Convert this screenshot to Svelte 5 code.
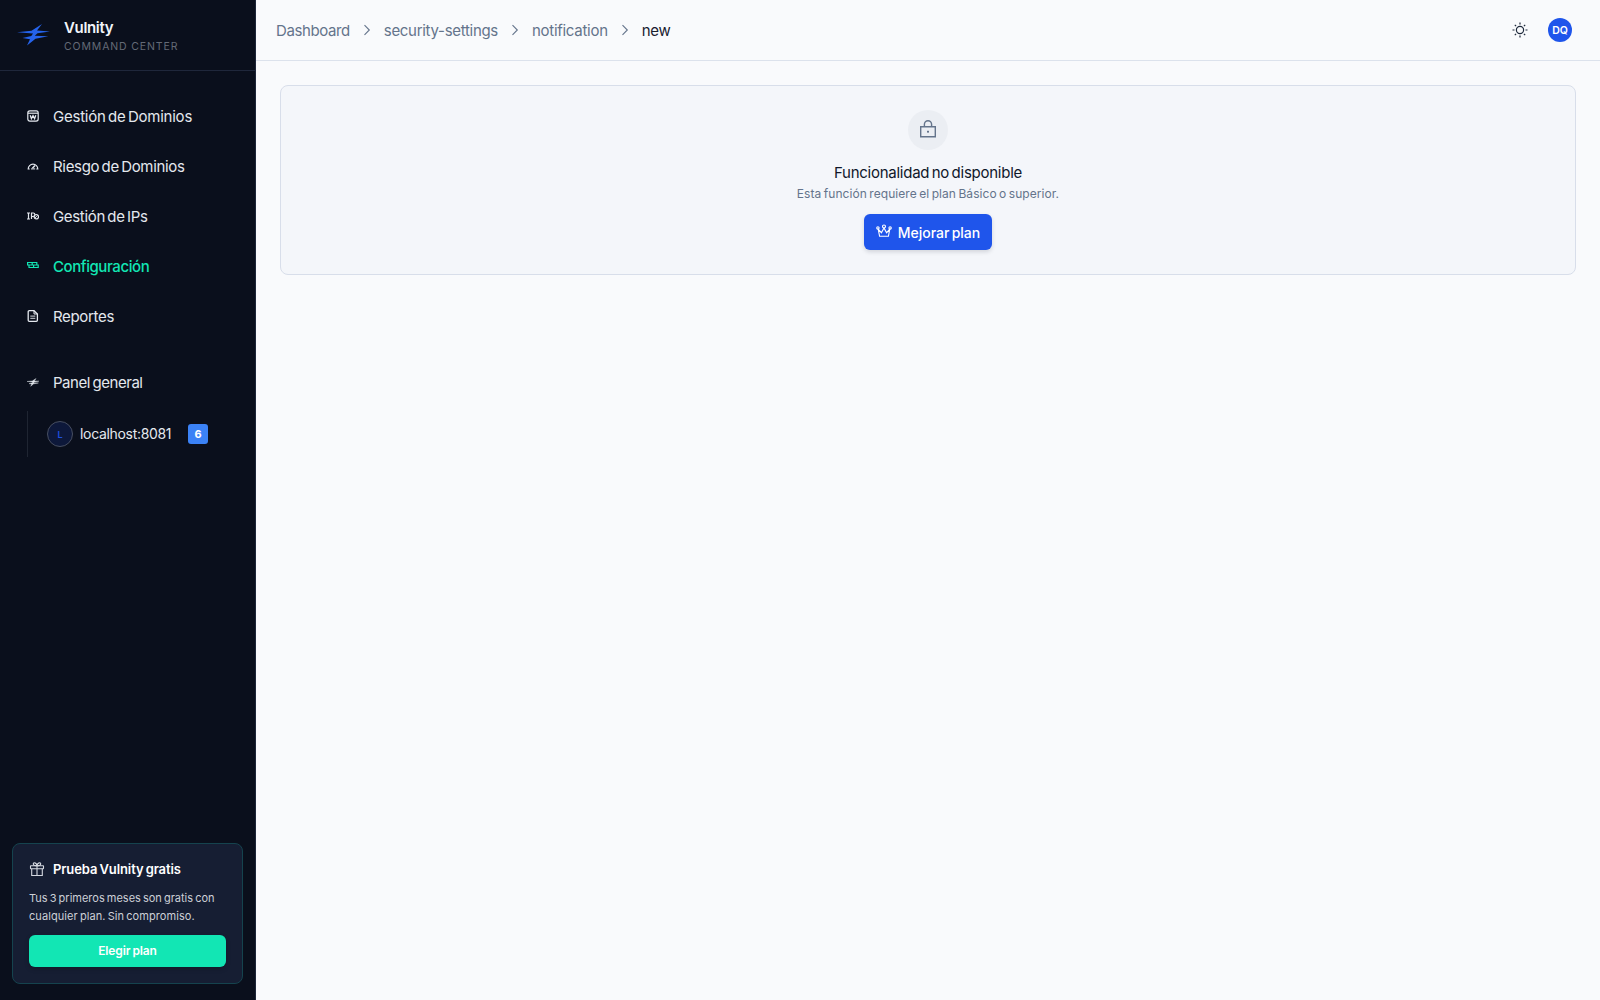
<script lang="ts">
  interface NavItem {
    id: string;
    label: string;
  }

  const navItems: NavItem[] = [
    { id: 'domains', label: 'Gestión de Dominios' },
    { id: 'risk', label: 'Riesgo de Dominios' },
    { id: 'ips', label: 'Gestión de IPs' },
    { id: 'config', label: 'Configuración' },
    { id: 'reports', label: 'Reportes' }
  ];

  const crumbs = ['Dashboard', 'security-settings', 'notification', 'new'];

  let active = $state('config');
</script>

{#snippet bolt()}
  <path d="M25 0 L20 6.6 L33 7.4 L20.5 9.3 L17.7 11.8 L31.3 12.3 L18.5 14.7 L10 21.4 L13 15.3 L5.5 14.1 L14.3 11.9 L16 9.5 L0 8.2 L14.5 6.7 Z" />
{/snippet}

<div class="app">
  <aside class="sidebar">
    <div class="brand">
      <svg class="logo" viewBox="0 0 33 22" width="33" height="22" fill="#2563eb">{@render bolt()}</svg>
      <div class="brand-text">
        <span class="brand-name">Vulnity</span>
        <span class="brand-sub">COMMAND CENTER</span>
      </div>
    </div>

    <nav>
      {#each navItems as item}
        <button class="nav-item {item.id}" class:active={active === item.id} onclick={() => (active = item.id)}>
          <svg class="nav-icon" viewBox="0 0 12 12" width="12" height="12" fill="none" stroke="currentColor">
            {#if item.id === 'domains'}
              <rect x="0.8" y="0.9" width="10.4" height="10.2" rx="2" stroke-width="1.2" />
              <path d="M1 3.2h10" stroke-width="1.2" />
              <path d="M3.2 5.2l1.2 3.4L6 5.6l1.6 3 1.2-3.4" stroke-width="1.3" />
            {:else if item.id === 'risk'}
              <path d="M2.7 9H1.2a4.8 4.8 0 0 1 9.6 0H9.3" stroke-width="1.2" />
              <path d="M5.4 8.2L8 5.4" stroke-width="1.5" />
              <path d="M4 8.9h4.2" />
            {:else if item.id === 'ips'}
              <path d="M0 3h3M1.5 3v6M0 9h3M4.5 9V3H6.2a1.7 1.7 0 0 1 0 3.5H4.5" stroke-width="1.2" />
              <circle cx="9.3" cy="6.7" r="2.2" stroke-width="1.2" />
              <path d="M7.8 8.2l2.8-3" />
            {:else if item.id === 'config'}
              <path d="M.6 2.5h9.2v2.5H.6zM5.2 2.5V5M2 5h9.2v2.5H2zM6.6 5v2.5" stroke-width="1.2" />
            {:else}
              <path d="M1.2 1.8Q1.2.7 2.3.7H7L10.4 4v6.2q0 1.1-1.1 1.1h-7q-1.1 0-1.1-1.1z" stroke-width="1.3" />
              <path d="M7 .8V4h3.3" />
              <path d="M3.3 6.2h5M3.3 8.3h5" opacity=".75" stroke-width="1.3" />
            {/if}
          </svg>
          <span class="nav-label">{item.label}</span>
        </button>
      {/each}
    </nav>

    <div class="panel">
      <button class="nav-item general">
        <svg class="nav-icon" viewBox="0 0 33 22" width="12" height="9" fill="currentColor" stroke="currentColor" stroke-width="1">{@render bolt()}</svg>
        <span class="nav-label">Panel general</span>
      </button>
      <div class="hosts">
        <span class="host-avatar">L</span>
        <span class="host-name">localhost:8081</span>
        <span class="badge">6</span>
      </div>
    </div>

    <section class="promo">
      <div class="promo-title">
        <svg viewBox="0 0 16 16" width="16" height="16" fill="none" stroke="#d4d8e0" stroke-width="1.1">
          <rect x="1.5" y="4.7" width="13" height="3" rx=".4" />
          <path d="M2.7 7.7v6.8h10.6V7.7M8 4.7v9.8M8 4.6C6.5 4.8 4.3 4.6 4.3 3S7.4 1 8 4.6C8.6 1 11.7 1.4 11.7 3S9.5 4.8 8 4.6z" />
        </svg>
        <strong>Prueba Vulnity gratis</strong>
      </div>
      <p><span class="line-one">Tus 3 primeros meses son gratis con</span><br /><span class="line-two">cualquier plan. Sin compromiso.</span></p>
      <button class="promo-btn">Elegir plan</button>
    </section>
  </aside>

  <div class="content">
    <header>
      <div class="crumbs">
        {#each crumbs as crumb, i}
          {#if i > 0}
            <svg viewBox="0 0 8 12" width="8" height="12" fill="none" stroke="#64748b" stroke-width="1.1"><path d="M1.5 1.2L6.3 6l-4.8 4.8" /></svg>
          {/if}
          <span class="crumb-{i}" class:current={i === crumbs.length - 1}>{crumb}</span>
        {/each}
      </div>
      <div class="actions">
        <svg viewBox="0 0 16 16" width="16" height="16" fill="none" stroke="#1e293b" stroke-width="1.2">
          <circle cx="8" cy="8" r="3.6" />
          <path d="M8 .5v2M8 13.5v2M.5 8h2M13.5 8h2M2.8 2.8l1.3 1.3M11.9 11.9l1.3 1.3M2.8 13.2l1.3-1.3M11.9 4.1l1.3-1.3" />
        </svg>
        <span class="avatar">DQ</span>
      </div>
    </header>

    <main>
      <div class="locked">
        <div class="lock">
          <svg viewBox="0 0 18 18" width="18" height="18" fill="none" stroke="#64748b" stroke-width="1.4">
            <path d="M1.7 6.7h14.6v10H1.7zM5.4 6.7V4.3a3.6 3.6 0 0 1 7.2 0v2.4" />
            <rect x="8" y="10.8" width="2" height="1.8" fill="#64748b" stroke="none" />
          </svg>
        </div>
        <h2>Funcionalidad no disponible</h2>
        <p>Esta función requiere el plan Básico o superior.</p>
        <button class="upgrade">
          <svg viewBox="0 0 16 14" width="16" height="14" fill="none" stroke="#fff" stroke-width="1.1">
            <path d="M3.6 12.3h8.8l1.4-7.2-3.2 3.6L8 4 5.4 8.7 2.2 5.1z" />
            <circle cx="1.9" cy="4" r="1.2" />
            <circle cx="8" cy="2.5" r="1.5" />
            <circle cx="14.1" cy="4" r="1.2" />
          </svg>
          <span>Mejorar plan</span>
        </button>
      </div>
    </main>
  </div>
</div>

<style>
  :global(body) {
    background: #f9fafc;
  }
  .app {
    display: flex;
    height: 100vh;
    font-family: Inter, 'Liberation Sans', sans-serif;
    color: #0f172a;
  }
  button {
    font: inherit;
    border: 0;
    padding: 0;
    cursor: pointer;
  }
  span,
  strong,
  h2 {
    white-space: nowrap;
  }

  .sidebar {
    box-sizing: border-box;
    width: 256px;
    flex-shrink: 0;
    display: flex;
    flex-direction: column;
    background: #0a0f1c;
    border-right: 1px solid #1e2639;
  }
  .brand {
    box-sizing: border-box;
    height: 71px;
    display: flex;
    align-items: center;
    gap: 14px;
    padding-left: 17px;
    border-bottom: 1px solid #1f273b;
  }
  .brand-text {
    display: flex;
    flex-direction: column;
    padding-top: 2px;
  }
  .brand-name {
    font-size: 15px;
    line-height: 20px;
    font-weight: 600;
    letter-spacing: -0.35px;
    color: #f1f4f9;
  }
  .brand-sub {
    font-size: 10.5px;
    line-height: 17px;
    letter-spacing: 0.87px;
    color: #646a76;
  }

  nav {
    padding-top: 21px;
  }
  .nav-item {
    width: 100%;
    height: 50px;
    display: flex;
    align-items: center;
    gap: 14px;
    padding-left: 27px;
    background: none;
    color: #e4e8ee;
    text-align: left;
  }
  .nav-icon {
    margin-top: -2px;
  }
  .nav-label {
    padding-bottom: 2px;
    font-size: 15px;
    letter-spacing: -0.33px;
    word-spacing: -1.5px;
  }
  .domains .nav-label {
    letter-spacing: -0.24px;
  }
  .config .nav-label {
    letter-spacing: -0.42px;
  }
  .general .nav-label {
    letter-spacing: -0.48px;
    word-spacing: -1px;
  }
  .active {
    color: #12e6b4;
    font-weight: 500;
  }
  .panel {
    padding-top: 16px;
  }
  .hosts {
    height: 46px;
    margin: 3px 0 0 27px;
    padding-left: 19px;
    display: flex;
    align-items: center;
    border-left: 1px solid #1f2532;
  }
  .host-avatar {
    box-sizing: border-box;
    width: 26px;
    height: 26px;
    display: grid;
    place-items: center;
    border: 1px solid #474e60;
    border-radius: 50%;
    background: #0d183a;
    color: #1f50e0;
    font-size: 9px;
    font-weight: 600;
  }
  .host-name {
    margin-left: 7px;
    width: 108px;
    padding-bottom: 1px;
    font-size: 14px;
    letter-spacing: -0.32px;
    color: #e4e8ee;
  }
  .badge {
    width: 20px;
    height: 20px;
    display: grid;
    place-items: center;
    border-radius: 3px;
    background: #3b82f6;
    color: #fff;
    font-size: 11px;
    font-weight: 700;
  }

  .promo {
    box-sizing: border-box;
    height: 141px;
    margin: auto 12px 16px;
    padding: 16px;
    border: 1px solid #15434e;
    border-radius: 8px;
    background: #161e33;
  }
  .promo-title {
    display: flex;
    align-items: center;
    gap: 8px;
    height: 17px;
    padding-bottom: 2px;
    color: #fff;
  }
  .promo-title strong {
    font-size: 13px;
    font-weight: 600;
    letter-spacing: -0.1px;
    word-spacing: -1px;
  }
  .promo p {
    margin: 10px 0;
    font-size: 11px;
    line-height: 18px;
    word-spacing: -1px;
    color: #cdd0d7;
  }
  .line-two {
    letter-spacing: 0.07px;
  }
  .promo-btn {
    width: 100%;
    height: 32px;
    padding-bottom: 2px;
    border-radius: 6px;
    background: #12e6b4;
    color: #fff;
    font-size: 12px;
    font-weight: 600;
    letter-spacing: -0.1px;
    word-spacing: -1px;
    box-shadow: 0 2px 5px #0003;
  }

  .content {
    flex: 1;
    min-width: 0;
  }
  header {
    box-sizing: border-box;
    height: 61px;
    display: flex;
    align-items: center;
    justify-content: space-between;
    padding: 0 28px 0 20px;
    border-bottom: 1px solid #dce2ec;
  }
  .crumbs {
    display: flex;
    align-items: center;
    gap: 13px;
    font-size: 15px;
    letter-spacing: -0.3px;
    color: #64748b;
  }
  .crumb-0 {
    letter-spacing: -0.4px;
  }
  .crumb-2 {
    letter-spacing: -0.28px;
  }
  .current {
    color: #1a2030;
  }
  .actions {
    display: flex;
    align-items: center;
    gap: 20px;
  }
  .avatar {
    width: 24px;
    height: 24px;
    display: grid;
    place-items: center;
    border-radius: 50%;
    background: #1f55eb;
    color: #fff;
    font-size: 10.5px;
    font-weight: 600;
  }

  main {
    padding: 24px;
  }
  .locked {
    box-sizing: border-box;
    height: 190px;
    display: flex;
    flex-direction: column;
    align-items: center;
    padding-top: 24px;
    border: 1px solid #d8deea;
    border-radius: 8px;
    background: #f4f6fa;
  }
  .lock {
    width: 40px;
    height: 40px;
    display: grid;
    place-items: center;
    border-radius: 50%;
    background: #ebeef3;
  }
  .lock svg {
    margin-top: -2px;
  }
  h2 {
    margin: 13px 0 0;
    font-size: 15px;
    line-height: 20px;
    font-weight: 400;
    letter-spacing: -0.25px;
    word-spacing: -1.5px;
  }
  .locked p {
    margin: 1px 0 0;
    font-size: 12px;
    line-height: 20px;
    letter-spacing: 0.06px;
    word-spacing: -1px;
    color: #64748b;
  }
  .upgrade {
    width: 128px;
    height: 36px;
    margin-top: 10px;
    display: flex;
    align-items: center;
    justify-content: center;
    gap: 6px;
    border-radius: 6px;
    background: #1f55eb;
    color: #fff;
    font-size: 14px;
    font-weight: 500;
    word-spacing: -1.5px;
    box-shadow: 0 2px 4px #0f172a26;
  }
  .upgrade svg {
    margin-top: -2px;
  }
</style>
